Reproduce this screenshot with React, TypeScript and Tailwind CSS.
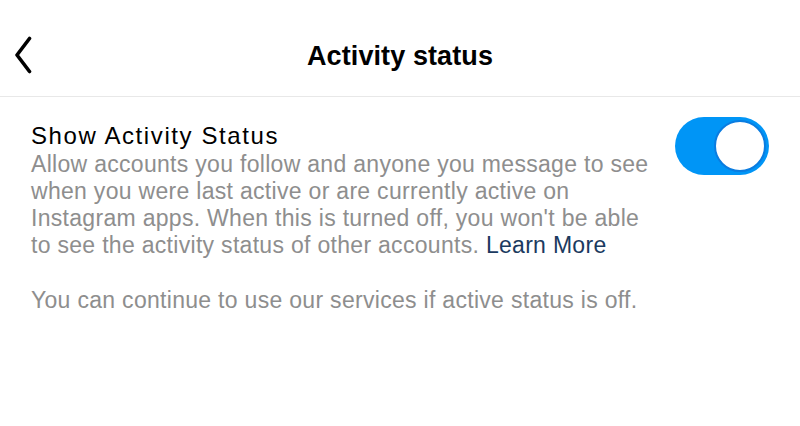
import { useState } from "react";

export default function App() {
  const [on, setOn] = useState(true);

  return (
    <div className="w-[800px] h-[426px] bg-white font-['Liberation_Sans',Arial,sans-serif] overflow-hidden">
      <header className="relative flex items-center justify-center h-[97px] border-b border-[#e8e8e8]">
        <button className="absolute left-[14px] top-[36px] text-black" aria-label="Back">
          <svg width="18" height="38" viewBox="0 0 18 38" fill="none">
            <path d="M15.5 2.5 L3 19 L15.5 35.5" stroke="currentColor" strokeWidth="3.6" strokeLinecap="round" strokeLinejoin="round" />
          </svg>
        </button>
        <h1 className="text-[27px] font-bold text-black tracking-[0.1px] mt-[17px]">Activity status</h1>
      </header>

      <div className="flex items-start justify-between pl-[31px] pr-[31px] pt-[25px]">
        <div className="w-[630px] whitespace-nowrap">
          <p className="text-[24px] leading-[28px] text-black tracking-[1.6px]">Show Activity Status</p>
          <p className="text-[23px] leading-[27px] text-[#8e8e8e] tracking-[0.3px] mt-[1px]">
            Allow accounts you follow and anyone you message to see
            <br />
            when you were last active or are currently active on
            <br />
            Instagram apps. When this is turned off, you won't be able
            <br />
            to see the activity status of other accounts.{" "}
            <span className="text-[#1b3a60]">Learn More</span>
          </p>
          <p className="text-[23px] leading-[27px] text-[#8e8e8e] tracking-[0.3px] mt-[28px]">
            You can continue to use our services if active status is off.
          </p>
        </div>
        <button
          onClick={() => setOn(!on)}
          className={`mt-[-5px] w-[94px] h-[58px] rounded-full p-[3px] flex items-center ${on ? "bg-[#0095f6] justify-end" : "bg-[#e5e5e5] justify-start"}`}
        >
          <span className="w-[52px] h-[52px] rounded-full bg-white border-[2px] border-[#0a7ce0]" />
        </button>
      </div>
    </div>
  );
}
